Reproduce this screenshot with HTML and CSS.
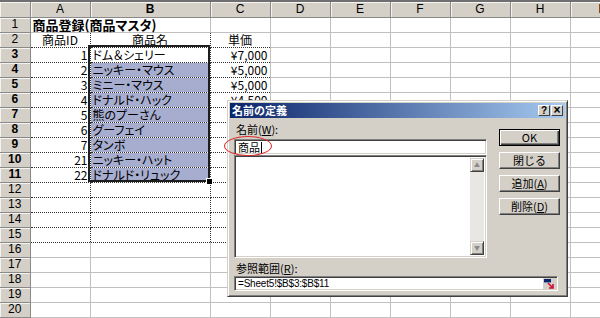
FILE: index.html
```html
<!DOCTYPE html>
<html lang="ja">
<head>
    <meta charset="UTF-8">
    <title>名前の定義</title>
    <link rel="stylesheet" href="styles.css">
</head>
<body>

<div class="sheet">
    <table class="grid">
        <colgroup>
            <col class="col-rh"><col class="col-a"><col class="col-b"><col class="col-c">
            <col class="col-n"><col class="col-n"><col class="col-n"><col class="col-n"><col class="col-n"><col class="col-n">
        </colgroup>
        <tr class="hdr"><th></th><th>A</th><th class="on">B</th><th>C</th><th>D</th><th>E</th><th>F</th><th>G</th><th>H</th><th>I</th></tr>
        <tr><th>1</th><td colspan="2" class="title">商品登録(商品マスタ)</td><td></td><td></td><td></td><td></td><td></td><td></td><td></td></tr>
        <tr><th>2</th><td class="d ctr">商品ID</td><td class="d ctr">商品名</td><td class="dc ctr">単価</td><td></td><td></td><td></td><td></td><td></td><td></td></tr>
        <tr><th class="on">3</th><td class="d num">1</td><td class="d">ドム＆シェリー</td><td class="dc num">¥7,000</td><td></td><td></td><td></td><td></td><td></td><td></td></tr>
        <tr><th class="on">4</th><td class="d num">2</td><td class="d sel">ニッキー・マウス</td><td class="dc num">¥5,000</td><td></td><td></td><td></td><td></td><td></td><td></td></tr>
        <tr><th class="on">5</th><td class="d num">3</td><td class="d sel">ミニー・マウス</td><td class="dc num">¥5,000</td><td></td><td></td><td></td><td></td><td></td><td></td></tr>
        <tr><th class="on">6</th><td class="d num">4</td><td class="d sel">ドナルド・ハック</td><td class="dc num">¥4,500</td><td></td><td></td><td></td><td></td><td></td><td></td></tr>
        <tr><th class="on">7</th><td class="d num">5</td><td class="d sel">熊のプーさん</td><td class="dc"></td><td></td><td></td><td></td><td></td><td></td><td></td></tr>
        <tr><th class="on">8</th><td class="d num">6</td><td class="d sel">グーフェイ</td><td class="dc"></td><td></td><td></td><td></td><td></td><td></td><td></td></tr>
        <tr><th class="on">9</th><td class="d num">7</td><td class="d sel">タンボ</td><td class="dc"></td><td></td><td></td><td></td><td></td><td></td><td></td></tr>
        <tr><th class="on">10</th><td class="d num">21</td><td class="d sel">ニッキー・ハット</td><td class="dc"></td><td></td><td></td><td></td><td></td><td></td><td></td></tr>
        <tr><th class="on">11</th><td class="d num">22</td><td class="d sel">ドナルド・リュック</td><td class="dc"></td><td></td><td></td><td></td><td></td><td></td><td></td></tr>
        <tr><th>12</th><td class="d"></td><td class="d"></td><td class="dc"></td><td></td><td></td><td></td><td></td><td></td><td></td></tr>
        <tr><th>13</th><td class="d"></td><td class="d"></td><td class="dc"></td><td></td><td></td><td></td><td></td><td></td><td></td></tr>
        <tr><th>14</th><td class="d"></td><td class="d"></td><td class="dc"></td><td></td><td></td><td></td><td></td><td></td><td></td></tr>
        <tr><th>15</th><td class="d"></td><td class="d"></td><td class="dc"></td><td></td><td></td><td></td><td></td><td></td><td></td></tr>
        <tr><th>16</th><td></td><td></td><td></td><td></td><td></td><td></td><td></td><td></td><td></td></tr>
        <tr><th>17</th><td></td><td></td><td></td><td></td><td></td><td></td><td></td><td></td><td></td></tr>
        <tr><th>18</th><td></td><td></td><td></td><td></td><td></td><td></td><td></td><td></td><td></td></tr>
        <tr><th>19</th><td></td><td></td><td></td><td></td><td></td><td></td><td></td><td></td><td></td></tr>
        <tr><th>20</th><td></td><td></td><td></td><td></td><td></td><td></td><td></td><td></td><td></td></tr>
    </table>

    <!-- selected range B3:B11 -->
    <div class="range"><span class="handle"></span></div>

    <div class="dlg">
        <div class="dlg-title">
            <span>名前の定義</span>
            <div class="tbtns"><span class="tbtn">?</span><span class="tbtn x">×</span></div>
        </div>
        <div class="dlg-body">
            <div class="dlg-main">
                <div class="dlg-left">
                    <div class="lbl">名前(<u>W</u>):</div>
                    <div class="field name">商品<span class="caret"></span></div>
                    <div class="list">
                        <div class="list-area"></div>
                        <div class="vscroll">
                            <span class="sb-btn">&#9650;</span>
                            <span class="sb-track"></span>
                            <span class="sb-btn">&#9660;</span>
                        </div>
                    </div>
                </div>
                <div class="dlg-btns">
                    <div class="btn def">OK</div>
                    <div class="btn">閉じる</div>
                    <div class="btn">追加(<u>A</u>)</div>
                    <div class="btn">削除(<u>D</u>)</div>
                </div>
            </div>
            <div class="lbl ref-lbl">参照範囲(<u>R</u>):</div>
            <div class="field ref">
                <span class="ref-text">=Sheet5!$B$3:$B$11</span>
                <span class="collapse">
                    <svg width="12" height="11" viewBox="0 0 12 11">
                        <rect x="1" y="1" width="7" height="3" fill="#0a246a"/>
                        <rect x="1" y="4" width="7" height="1" fill="#7f8fbf"/>
                        <path d="M5 5 L10 10 M10 6 L10 10 L6 10" stroke="#d0103a" stroke-width="1.6" fill="none"/>
                    </svg>
                </span>
            </div>
        </div>
        <!-- red hand-drawn mark around the typed name -->
        <div class="mark"></div>
    </div>
</div>

</body>
</html>
```

FILE: styles.css
```css
body {
    margin: 0;
    background-color: #fff;
    font-family: "Noto Sans CJK JP", sans-serif;
    overflow: hidden;
}

.sheet {
    position: relative;
    width: 600px;
    height: 318px;
    overflow: hidden;
}

/* ---- worksheet grid ---- */
.grid {
    border-collapse: collapse;
    table-layout: fixed;
    width: 630px;
    font-size: 12px;
    font-feature-settings: "palt";
    color: #000;
}
.col-rh { width: 30px; }
.col-a { width: 60px; }
.col-b { width: 120px; }
.col-c { width: 60px; }
.col-n { width: 60px; }

.grid tr { height: 15px; }
.grid td, .grid th {
    padding: 0;
    line-height: 13px;
    white-space: nowrap;
    overflow: hidden;
    border-right: 1px solid #c0c0c0;
    border-bottom: 1px solid #c0c0c0;
}
.grid th {
    background-color: #d4d0c8;
    font-family: "Liberation Sans", Arial, sans-serif;
    font-weight: normal;
    font-size: 12px;
    text-align: center;
    border-right: 1px solid #8a8a8a;
    border-bottom: 1px solid #8a8a8a;
    box-shadow: inset 1px 1px #f4f3ef;
}
.grid th.on { font-weight: bold; }
.grid .hdr { height: 16px; }
.grid .hdr th { border-top: 2px solid #6f6f6f; }

.grid td { padding: 0 2px; }
.grid .title {
    font-weight: bold;
    font-size: 13px;
    overflow: visible;
}
.grid .ctr { text-align: center; }
.grid .num { text-align: right; }
.grid .d {
    border-right: 1px dotted #303030;
    border-bottom: 1px dotted #303030;
}
.grid .dc { border-bottom: 1px dotted #303030; }
.grid .sel { background-color: #a6adcf; }

.range {
    position: absolute;
    left: 88px;
    top: 45px;
    width: 118px;
    height: 133px;
    border: 2px solid #1e1e1e;
}
.handle {
    position: absolute;
    right: -5px;
    bottom: -5px;
    width: 5px;
    height: 5px;
    background-color: #000;
    border: 1px solid #fff;
}

/* ---- dialog ---- */
.dlg {
    position: absolute;
    left: 227px;
    top: 100px;
    width: 341px;
    height: 197px;
    box-sizing: border-box;
    background-color: #d4d0c8;
    border: 1px solid;
    border-color: #d4d0c8 #404040 #404040 #d4d0c8;
    box-shadow: inset 1px 1px #fff, inset -1px -1px #808080;
    padding: 2px;
    font-size: 11px;
    color: #000;
}
.dlg-title {
    display: flex;
    align-items: center;
    justify-content: space-between;
    height: 15px;
    padding: 0 2px 0 2px;
    background: linear-gradient(to right, #0a246a, #a6caf0);
    color: #fff;
    font-weight: bold;
    line-height: 15px;
}
.tbtns {
    display: flex;
    gap: 1px;
}
.tbtn {
    display: flex;
    align-items: center;
    justify-content: center;
    width: 12px;
    height: 11px;
    box-sizing: border-box;
    background-color: #d4d0c8;
    color: #000;
    font-family: "Liberation Sans", Arial, sans-serif;
    font-size: 10px;
    font-weight: bold;
    line-height: 11px;
    border: 1px solid;
    border-color: #fff #404040 #404040 #fff;
}
.tbtn.x { font-size: 12px; }

.dlg-body {
    padding: 4px 0 0 4px;
}
.dlg-main {
    display: flex;
    gap: 12px;
}
.dlg-left {
    width: 253px;
}
.lbl {
    line-height: 14px;
    height: 14px;
    padding-left: 2px;
    margin-bottom: 3px;
}
.field {
    box-sizing: border-box;
    background-color: #fff;
    border: 1px solid;
    border-color: #808080 #fff #fff #808080;
    box-shadow: inset 1px 1px #404040, inset -1px -1px #d4d0c8;
}
.name {
    height: 16px;
    padding: 0 3px;
    line-height: 14px;
    display: flex;
    align-items: center;
}
.caret {
    display: inline-block;
    width: 1px;
    height: 11px;
    background-color: #000;
    margin-left: 1px;
}
.list {
    display: flex;
    height: 103px;
    box-sizing: border-box;
    border: 1px solid;
    border-color: #808080 #fff #fff #808080;
    box-shadow: inset 1px 1px #404040, inset -1px -1px #d4d0c8;
    padding: 2px 2px 2px 2px;
    background-color: #fff;
}
.list-area { flex: 1; }
.vscroll {
    display: flex;
    flex-direction: column;
    width: 14px;
}
.sb-btn {
    height: 14px;
    box-sizing: border-box;
    background-color: #d4d0c8;
    border: 1px solid;
    border-color: #d4d0c8 #404040 #404040 #d4d0c8;
    box-shadow: inset 1px 1px #fff, inset -1px -1px #808080;
    color: #8a8a8a;
    font-size: 6px;
    line-height: 12px;
    text-align: center;
}
.sb-track {
    flex: 1;
    background-color: #e9e7e3;
}

.dlg-btns {
    display: flex;
    flex-direction: column;
    gap: 6px;
    padding-top: 7px;
    width: 61px;
}
.btn {
    height: 17px;
    box-sizing: border-box;
    background-color: #d4d0c8;
    border: 1px solid;
    border-color: #fff #404040 #404040 #fff;
    box-shadow: inset -1px -1px #808080;
    text-align: center;
    line-height: 15px;
}
.btn.def {
    border: 1px solid #000;
    box-shadow: inset 1px 1px #fff, inset -1px -1px #404040, inset -2px -2px #808080;
}

.ref-lbl {
    margin-top: 3px;
    margin-bottom: 1px;
}
.ref {
    display: flex;
    align-items: center;
    justify-content: space-between;
    width: 324px;
    height: 15px;
    padding: 0 1px 0 3px;
}
.ref-text {
    font-family: "Liberation Sans", Arial, sans-serif;
    font-size: 10px;
    letter-spacing: -0.2px;
}
.collapse {
    display: flex;
    width: 13px;
    height: 12px;
    background-color: #d4d0c8;
}

.mark {
    position: absolute;
    left: -4px;
    top: 35px;
    width: 48px;
    height: 20px;
    box-sizing: border-box;
    border: 1px solid #dc2a2a;
    border-radius: 50%;
}
```
